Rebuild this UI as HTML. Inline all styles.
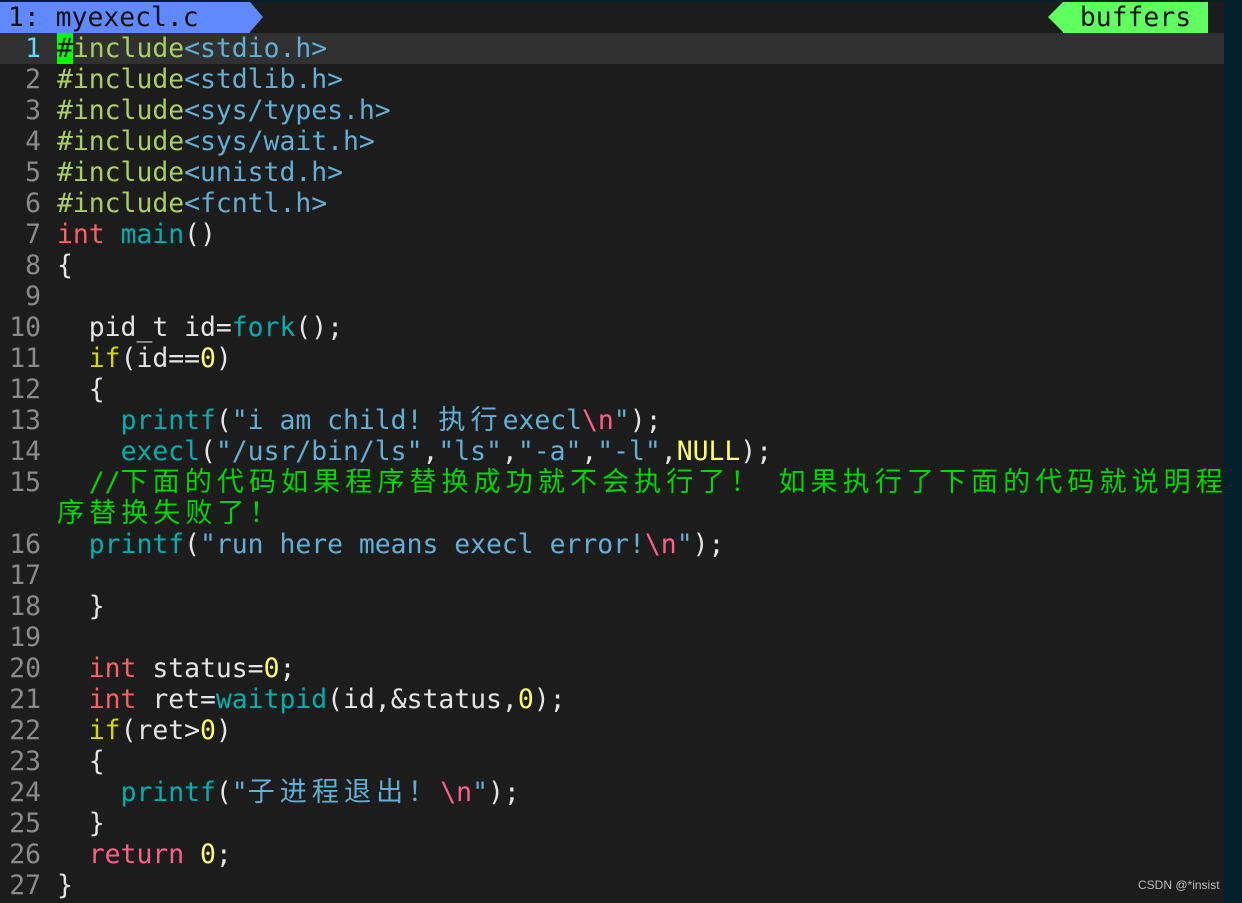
<!DOCTYPE html>
<html><head><meta charset="utf-8"><style>
html,body{margin:0;padding:0}
body{width:1242px;height:903px;background:#1c1c1c;position:relative;overflow:hidden;font-family:"DejaVu Sans Mono","Liberation Mono","Noto Sans CJK SC",monospace;font-size:26.4px;color:#e4e4e4}
.rt{position:absolute;left:1224px;top:0;width:18px;height:903px;background:#04202a}
.top{position:absolute;left:0;top:0;width:1224px;height:2px;background:#04202a}
.tab{position:absolute;left:0;top:2px;width:250px;height:31px;background:#6088ff;color:#111;line-height:31px;padding-left:8px;box-sizing:border-box;white-space:pre}
.tarr{position:absolute;left:250px;top:2px;width:0;height:0;border-top:15.5px solid transparent;border-bottom:15.5px solid transparent;border-left:13px solid #6088ff}
.buf{position:absolute;left:1063px;top:2px;width:145px;height:31px;background:#5fff5f;color:#111;line-height:31px;text-align:center}
.barr{position:absolute;left:1048px;top:2px;width:0;height:0;border-top:15.5px solid transparent;border-bottom:15.5px solid transparent;border-right:15px solid #5fff5f}
.cl{position:absolute;left:0;top:33px;width:1224px;height:31px;background:#303030}
.ln{position:absolute;left:0;width:41px;text-align:right;color:#8a8a8a;line-height:31px;height:31px}
.cd{position:absolute;left:57px;white-space:pre;line-height:31px;height:31px}
.k{color:#a8d060}.h{color:#5fafd7}.r{color:#ff5f5f}.t{color:#00afaf}.s{color:#5fafd7}.e{color:#ff5f87}.y{color:#ffff5f}.f{color:#d7d700}.g{color:#00d700}
.c{font-family:"Noto Sans CJK SC",sans-serif;font-size:27px;letter-spacing:5.1px;line-height:0}
.cur{background:#00ff00;color:#111}
.wm{position:absolute;left:1138px;top:878px;font-family:"Liberation Sans",sans-serif;font-size:12px;color:#bbb}
</style></head><body>
<div class="top"></div>
<div class="tab">1: myexecl.c</div><div class="tarr"></div>
<div class="barr"></div><div class="buf">buffers</div>
<div class="cl"></div>
<div class="rt"></div>

<div class="ln" style="top:33px;color:#5fd7ff">1</div><div class="cd" style="top:33px"><span class="cur">#</span><span class="k">include</span><span class="h">&lt;stdio.h&gt;</span></div>
<div class="ln" style="top:64px">2</div><div class="cd" style="top:64px"><span class="k">#include</span><span class="h">&lt;stdlib.h&gt;</span></div>
<div class="ln" style="top:95px">3</div><div class="cd" style="top:95px"><span class="k">#include</span><span class="h">&lt;sys/types.h&gt;</span></div>
<div class="ln" style="top:126px">4</div><div class="cd" style="top:126px"><span class="k">#include</span><span class="h">&lt;sys/wait.h&gt;</span></div>
<div class="ln" style="top:157px">5</div><div class="cd" style="top:157px"><span class="k">#include</span><span class="h">&lt;unistd.h&gt;</span></div>
<div class="ln" style="top:188px">6</div><div class="cd" style="top:188px"><span class="k">#include</span><span class="h">&lt;fcntl.h&gt;</span></div>
<div class="ln" style="top:219px">7</div><div class="cd" style="top:219px"><span class="r">int</span> <span class="t">main</span>()</div>
<div class="ln" style="top:250px">8</div><div class="cd" style="top:250px">{</div>
<div class="ln" style="top:281px">9</div>
<div class="ln" style="top:312px">10</div><div class="cd" style="top:312px">  pid_t id=<span class="t">fork</span>();</div>
<div class="ln" style="top:343px">11</div><div class="cd" style="top:343px">  <span class="f">if</span>(id==<span class="y">0</span>)</div>
<div class="ln" style="top:374px">12</div><div class="cd" style="top:374px">  {</div>
<div class="ln" style="top:405px">13</div><div class="cd" style="top:405px">    <span class="t">printf</span>(<span class="s">"i am child! <span class="c">执行</span>execl</span><span class="e">\n</span><span class="s">"</span>);</div>
<div class="ln" style="top:436px">14</div><div class="cd" style="top:436px">    <span class="t">execl</span>(<span class="s">"/usr/bin/ls"</span>,<span class="s">"ls"</span>,<span class="s">"-a"</span>,<span class="s">"-l"</span>,<span class="y">NULL</span>);</div>
<div class="ln" style="top:467px">15</div><div class="cd g" style="top:467px">  //<span class="c">下面的代码如果程序替换成功就不会执行了！</span> <span class="c">如果执行了下面的代码就说明程</span></div>
<div class="cd g" style="top:498px"><span class="c">序替换失败了！</span></div>
<div class="ln" style="top:529px">16</div><div class="cd" style="top:529px">  <span class="t">printf</span>(<span class="s">"run here means execl error!</span><span class="e">\n</span><span class="s">"</span>);</div>
<div class="ln" style="top:560px">17</div>
<div class="ln" style="top:591px">18</div><div class="cd" style="top:591px">  }</div>
<div class="ln" style="top:622px">19</div>
<div class="ln" style="top:653px">20</div><div class="cd" style="top:653px">  <span class="r">int</span> status=<span class="y">0</span>;</div>
<div class="ln" style="top:684px">21</div><div class="cd" style="top:684px">  <span class="r">int</span> ret=<span class="t">waitpid</span>(id,&amp;status,<span class="y">0</span>);</div>
<div class="ln" style="top:715px">22</div><div class="cd" style="top:715px">  <span class="f">if</span>(ret&gt;<span class="y">0</span>)</div>
<div class="ln" style="top:746px">23</div><div class="cd" style="top:746px">  {</div>
<div class="ln" style="top:777px">24</div><div class="cd" style="top:777px">    <span class="t">printf</span>(<span class="s">"<span class="c">子进程退出！</span></span><span class="e">\n</span><span class="s">"</span>);</div>
<div class="ln" style="top:808px">25</div><div class="cd" style="top:808px">  }</div>
<div class="ln" style="top:839px">26</div><div class="cd" style="top:839px">  <span class="e">return</span> <span class="y">0</span>;</div>
<div class="ln" style="top:870px">27</div><div class="cd" style="top:870px">}</div>
<div class="wm">CSDN @*insist</div>
</body></html>
